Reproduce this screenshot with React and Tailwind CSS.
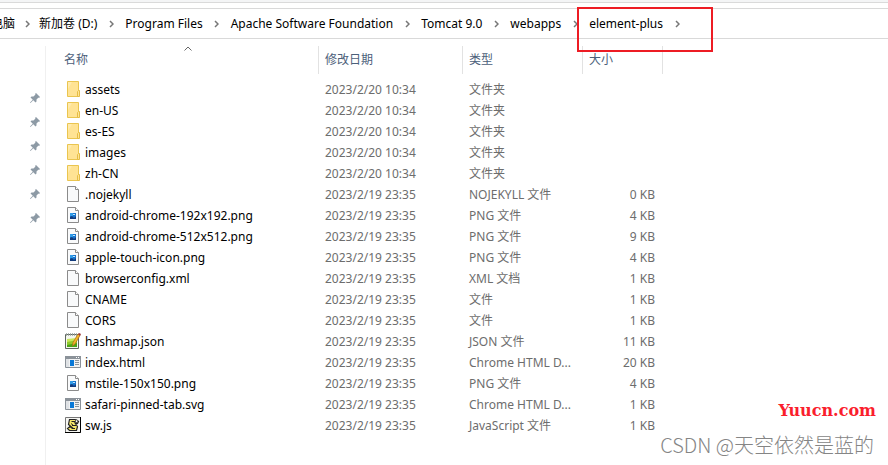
import React from "react";

const crumbs = ["电脑", "新加卷 (D:)", "Program Files", "Apache Software Foundation", "Tomcat 9.0", "webapps", "element-plus"];

const files = [
  ["folder", "assets", "2023/2/20 10:34", "文件夹", ""],
  ["folder", "en-US", "2023/2/20 10:34", "文件夹", ""],
  ["folder", "es-ES", "2023/2/20 10:34", "文件夹", ""],
  ["folder", "images", "2023/2/20 10:34", "文件夹", ""],
  ["folder", "zh-CN", "2023/2/20 10:34", "文件夹", ""],
  ["file", ".nojekyll", "2023/2/19 23:35", "NOJEKYLL 文件", "0 KB"],
  ["image", "android-chrome-192x192.png", "2023/2/19 23:35", "PNG 文件", "4 KB"],
  ["image", "android-chrome-512x512.png", "2023/2/19 23:35", "PNG 文件", "9 KB"],
  ["image", "apple-touch-icon.png", "2023/2/19 23:35", "PNG 文件", "4 KB"],
  ["file", "browserconfig.xml", "2023/2/19 23:35", "XML 文档", "1 KB"],
  ["file", "CNAME", "2023/2/19 23:35", "文件", "1 KB"],
  ["file", "CORS", "2023/2/19 23:35", "文件", "1 KB"],
  ["notepad", "hashmap.json", "2023/2/19 23:35", "JSON 文件", "11 KB"],
  ["html", "index.html", "2023/2/19 23:35", "Chrome HTML D...", "20 KB"],
  ["image", "mstile-150x150.png", "2023/2/19 23:35", "PNG 文件", "4 KB"],
  ["html", "safari-pinned-tab.svg", "2023/2/19 23:35", "Chrome HTML D...", "1 KB"],
  ["script", "sw.js", "2023/2/19 23:35", "JavaScript 文件", "1 KB"],
];

function Page() {
  return (
    <>
      <path d="M2.5 .5H10.5L13.5 3.5V15.5H2.5Z" fill="#f9fafb" stroke="#8b8b8b" />
      <path d="M10.5 .5V3.5H13.5" fill="#fff" stroke="#8b8b8b" />
    </>
  );
}

function FileIcon({ kind }) {
  return (
    <svg viewBox="0 0 16 16" className="size-4 shrink-0" aria-hidden="true">
      {kind === "folder" && (
        <>
          <path d="M2.5 .5H13.5V15.5H2.5Z" fill="#ffe394" stroke="#eac54f" />
          <path d="M3 1H7L3 8Z" fill="#ffebae" />
          <path d="M12.5 15.5V10.5L13.5 9.5H14.5V15.5Z" fill="#ffe394" stroke="#e5bd45" />
        </>
      )}
      {kind === "file" && <Page />}
      {kind === "image" && (
        <>
          <Page />
          <path d="M5 6H11V12H5Z" fill="#1673cc" />
          <path d="M5 6H8V9H5Z" fill="#2f9be8" />
          <path d="M5 12V10L7 9L9 11L11 9V12Z" fill="#123b7c" />
          <path d="M8 7H10V8H8Z" fill="#bfe6ff" />
        </>
      )}
      {kind === "notepad" && (
        <>
          <path d="M.5 1.5H13.5V15.5H.5Z" fill="#f4f7ee" stroke="#5f6660" />
          <path d="M2 6L12 5V14H2Z" fill="#c9e85a" />
          <path d="M2 9L12 7V14H2Z" fill="#8fcb2c" />
          <path d="M2 12L12 10V14H2Z" fill="#4da31a" />
          <path d="M1.5 0V3M3.5 0V3M5.5 0V3M7.5 0V3M9.5 0V3M11.5 0V3" stroke="#9ba3a0" strokeWidth=".8" />
          <path d="M13 1L15 2.500L10 11L7.500 13L8 9.500Z" fill="#f5b52a" stroke="#a86a16" strokeWidth=".7" />
          <path d="M13 1L14 0L16 1L15 3Z" fill="#9b3434" />
        </>
      )}
      {kind === "html" && (
        <>
          <path d="M.5 2.5H15.5V13.5H.5Z" fill="#f1f2f3" stroke="#8b9299" />
          <path d="M0 2H16V5H0Z" fill="#8b9299" />
          <path d="M11 3H12V4H11ZM13 3H14V4H13Z" fill="#fff" />
          <path d="M1 5H4V13H1Z" fill="#dfe2e5" />
          <path d="M5 6H9V12H5Z" fill="#0878d7" />
          <path d="M10 6.500H14M10 8.500H14M10 10.500H14" stroke="#8b949c" />
        </>
      )}
      {kind === "script" && (
        <>
          <path d="M.5 .5H15.5V15.5H.5Z" fill="#f6f6f2" stroke="#777" />
          <path d="M0 15.500H15.500V0" fill="none" stroke="#000" />
          <path d="M4.500 2.500H10.500L13.500 4.500L12.500 6.500L10 6L12.500 9.500L11.500 13.500H4.500L2.500 11.500L4.500 10L7 10.500L3.500 7.500Z" fill="#f3e56a" stroke="#222" strokeWidth="1.200" />
          <path d="M6.500 4.500H10M6 6.500L8.500 8.500M7 8.500H11M6.500 11.500H10" fill="none" stroke="#222" />
          <path d="M10.500 2.500L13 3.500L12.500 5.500H10.500Z" fill="#fff" stroke="#222" strokeWidth=".7" />
        </>
      )}
    </svg>
  );
}

function Pin() {
  return (
    <svg viewBox="0 0 10 10" className="size-[10px]" aria-hidden="true">
      <path d="M6 0L10 4L9 5L8.500 4.500L6.500 6.500L6.500 8.500L5.500 9.500L3.300 7.200L.5 10L0 9.500L2.800 6.700L.5 4.500L1.500 3.500L3.500 3.500L5.500 1.500L5 1Z" fill="#8d9aa5" />
    </svg>
  );
}

function Chevron() {
  return (
    <svg viewBox="0 0 5 8" className="h-2 w-[5px]" aria-hidden="true">
      <path d="M1 1L4 4L1 7" fill="none" stroke="#777" strokeWidth="1.500" />
    </svg>
  );
}

const headCell = "relative h-7 border-l border-[#e2e2e2] pl-1.5 text-left font-normal";

export default function App() {
  return (
    <div className="relative flex min-h-screen flex-col overflow-hidden bg-white font-['Noto_Sans','Noto_Sans_CJK_SC',sans-serif] text-[12px] text-black">
      <div className="h-[3px] border-b border-[#dadada] bg-[#f4f5f6]" />
      <nav className="mt-[5px] flex h-[31px] items-center border-y border-[#d9d9d9]" aria-label="路径">
        <ol className="-ml-[9px] flex items-center whitespace-nowrap">
          {crumbs.map((c, i) => (
            <li key={c} className="relative flex items-center">
              <a href="#path">{c}</a>
              <span className={i === 0 ? "flex w-6 justify-center" : "flex w-7 justify-center"}><Chevron /></span>
              {i === crumbs.length - 1 && (
                <span className="pointer-events-none absolute -top-2 -left-3 z-10 h-[45px] w-[136px] border-2 border-[#ed1c24]" />
              )}
            </li>
          ))}
        </ol>
      </nav>
      <div className="flex flex-1 pt-[7px]">
        <aside className="flex w-[46px] shrink-0 flex-col items-end gap-[14px] border-r border-[#f0f0f0] pt-[47px] pr-[5px]">
          {[0, 1, 2, 3, 4, 5].map((n) => <Pin key={n} />)}
        </aside>
        <main className="min-w-0 flex-1 pl-[18px]">
          <table className="w-[599px] table-fixed border-separate border-spacing-0 whitespace-nowrap">
            <colgroup>
              <col className="w-[254px]" />
              <col className="w-[144px]" />
              <col className="w-[120px]" />
              <col className="w-[81px]" />
            </colgroup>
            <thead className="text-[#4c607a]">
              <tr>
                <th className="relative h-7 text-left font-normal">
                  名称
                  <svg viewBox="0 0 8 5" className="absolute top-0 left-[120px] h-[5px] w-2" aria-hidden="true">
                    <path d="M.5 4.500L4 1L7.500 4.500" fill="none" stroke="#666" />
                  </svg>
                </th>
                <th className={headCell}>修改日期</th>
                <th className={headCell}>类型</th>
                <th className={headCell + " border-r"}>大小</th>
              </tr>
            </thead>
            <tbody className="text-[#6d6d6d]">
              <tr aria-hidden="true"><td className="h-[5px]" colSpan={4} /></tr>
              {files.map(([kind, name, date, type, size]) => (
                <tr key={name} className="h-[21px]">
                  <td className="p-0 text-black">
                    <div className="flex h-[21px] items-start gap-1 pt-0.5 pl-px">
                      <FileIcon kind={kind} />
                      <span className="leading-[17px]">{name}</span>
                    </div>
                  </td>
                  <td className="p-0 pl-[7px]">{date}</td>
                  <td className="p-0 pl-[7px]">{type}</td>
                  <td className="p-0 pr-2 text-right">{size}</td>
                </tr>
              ))}
            </tbody>
          </table>
        </main>
      </div>
      <div className="absolute right-3 bottom-[44px] font-['DejaVu_Serif',serif] text-[16px] leading-5 font-bold text-[#fa1e2d]">Yuucn.com</div>
      <div className="absolute right-[14px] bottom-1.5 font-['Noto_Sans_CJK_SC',sans-serif] text-[20px] leading-7 font-light text-[#858585]">CSDN @天空依然是蓝的</div>
    </div>
  );
}
